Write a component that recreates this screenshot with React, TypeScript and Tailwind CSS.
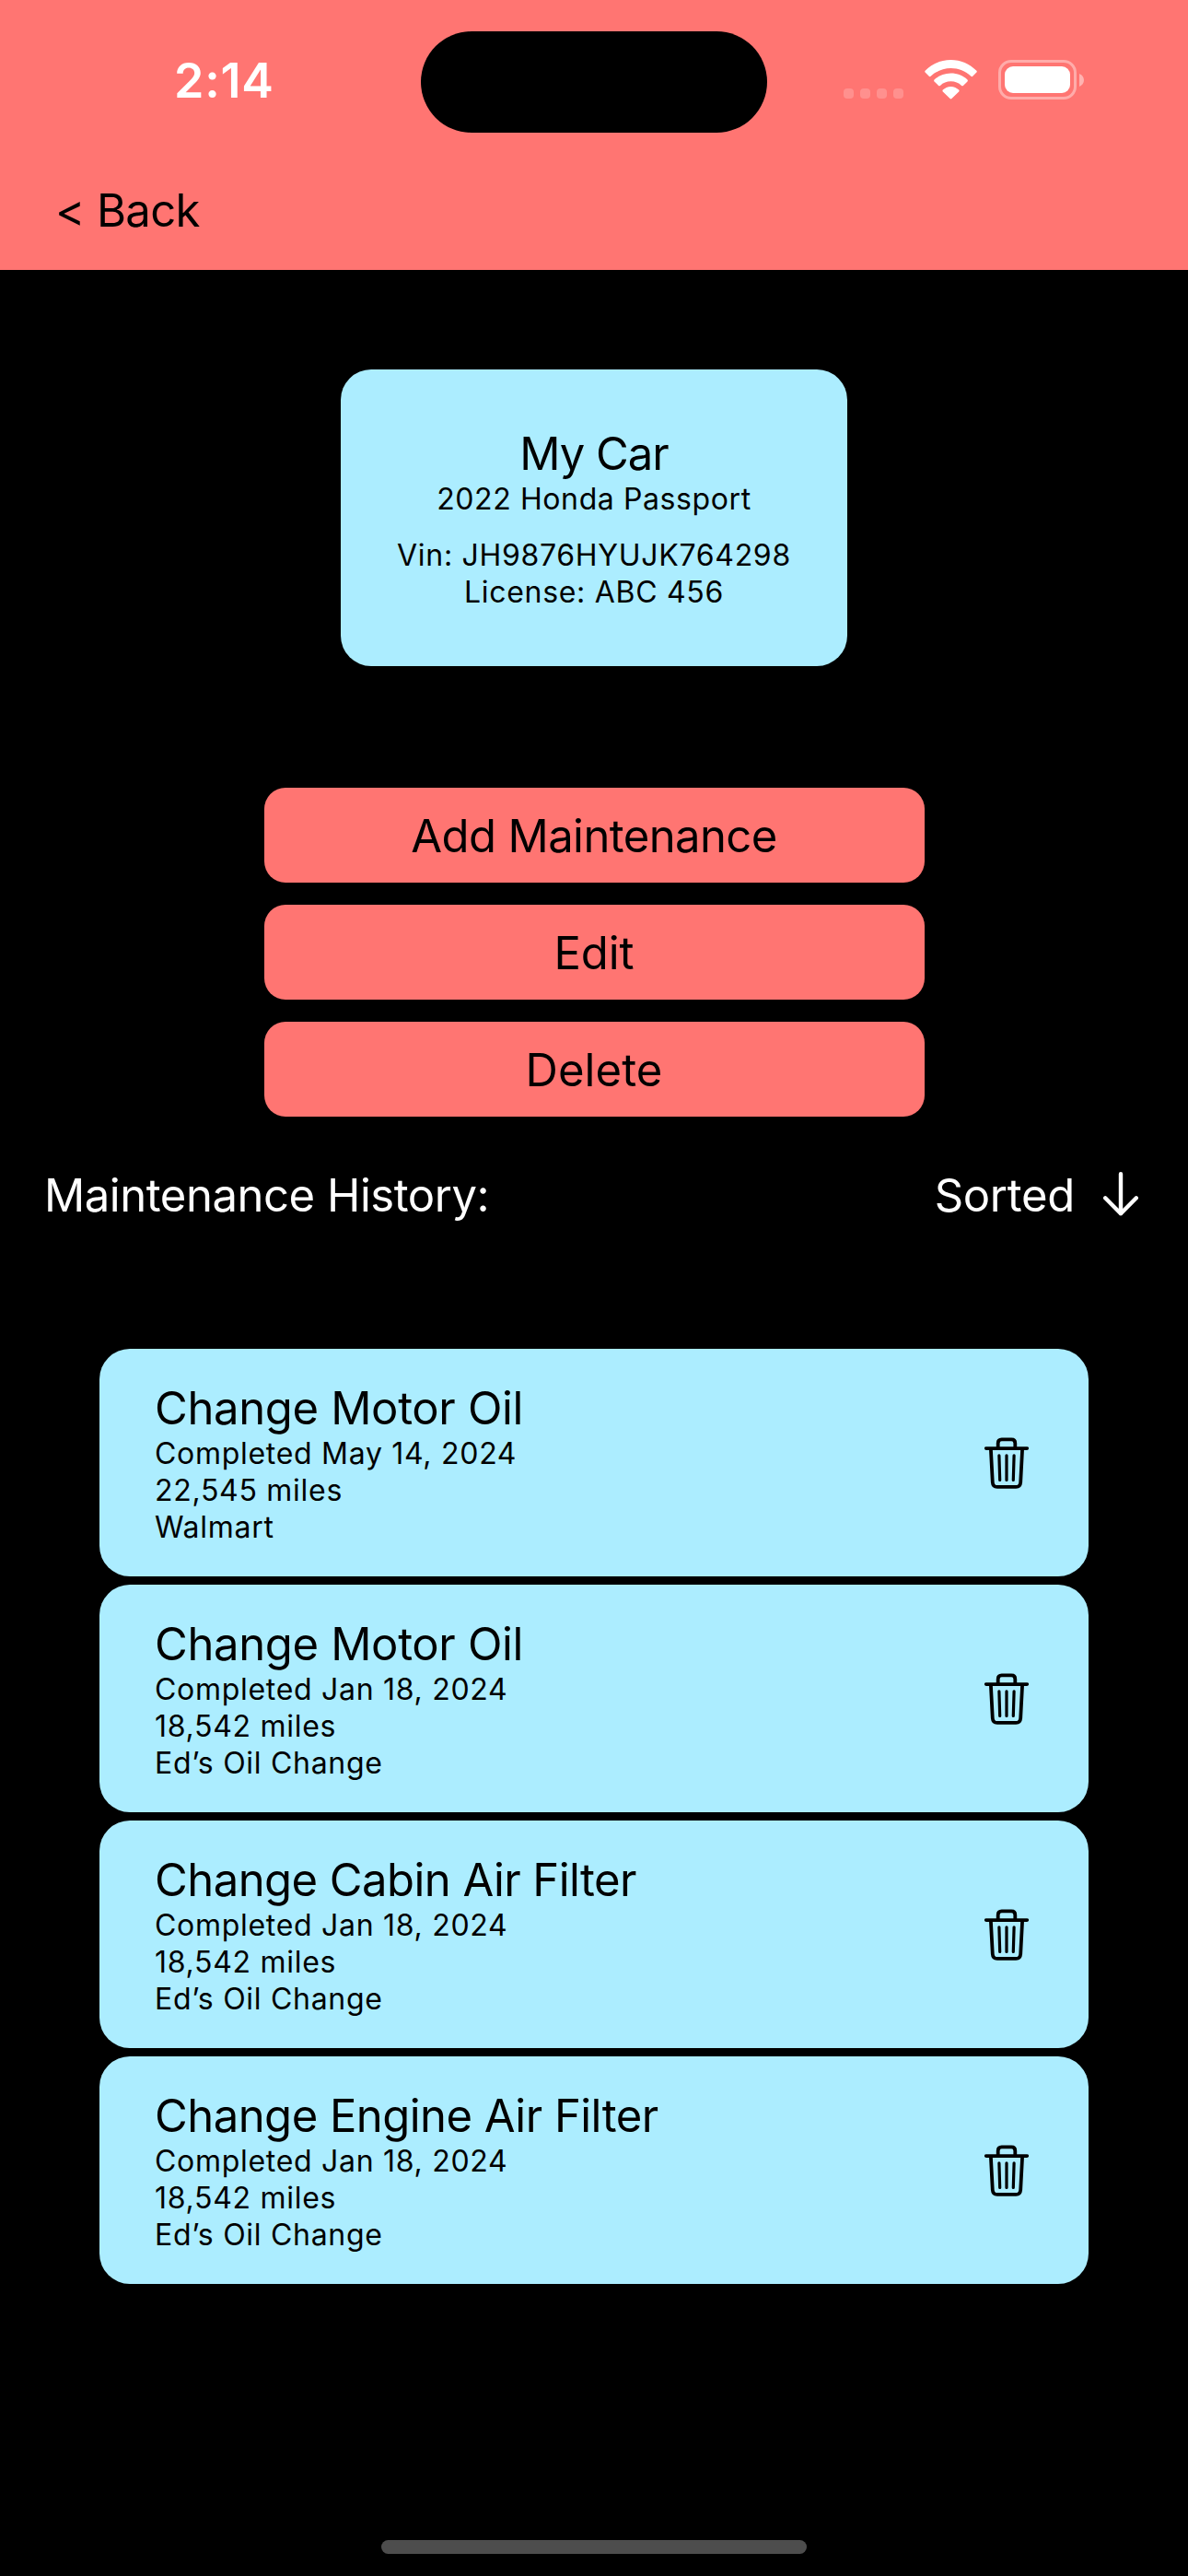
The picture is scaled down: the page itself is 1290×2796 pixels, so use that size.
type Entry = {
  title: string;
  tracking: string;
  date: string;
  miles: string;
  shop: string;
};

const entries: Entry[] = [
  { title: 'Change Motor Oil', tracking: 'tracking-[-0.35px]', date: 'May 14, 2024', miles: '22,545', shop: 'Walmart' },
  { title: 'Change Motor Oil', tracking: 'tracking-[-0.35px]', date: 'Jan 18, 2024', miles: '18,542', shop: 'Ed’s Oil Change' },
  { title: 'Change Cabin Air Filter', tracking: 'tracking-[-0.55px]', date: 'Jan 18, 2024', miles: '18,542', shop: 'Ed’s Oil Change' },
  { title: 'Change Engine Air Filter', tracking: 'tracking-[-0.53px]', date: 'Jan 18, 2024', miles: '18,542', shop: 'Ed’s Oil Change' },
];

const actions = [
  { label: 'Add Maintenance', tracking: 'tracking-[-0.6px]' },
  { label: 'Edit', tracking: 'tracking-[-0.1px]' },
  { label: 'Delete', tracking: 'tracking-[0.1px]' },
];

function WifiIcon() {
  return (
    <svg width="57" height="43" viewBox="0 0 57 43" fill="white">
      <path d="M28.5 9C36.5 9 44.5 12.2 50.4 17.8c.5.5 1.3.5 1.8 0L56.4 13.6c.5-.5.5-1.3 0-1.8C48.9 4.3 39 0 28.5 0S8.1 4.3.6 11.8c-.5.5-.5 1.3 0 1.8l4.2 4.2c.5.5 1.3.5 1.8 0C12.5 12.2 20.5 9 28.5 9Z" />
      <path d="M28.5 23.3c4.4 0 8.5 1.6 11.6 4.6.5.5 1.3.5 1.8 0l4.6-4.5c.5-.5.5-1.4 0-1.9C41.7 17.2 35.4 14.6 28.5 14.6s-13.2 2.6-18 6.9c-.5.5-.5 1.4 0 1.9l4.6 4.5c.5.5 1.3.5 1.8 0 3.1-3 7.2-4.6 11.6-4.6Z" />
      <path d="M37.2 32.6c.5.5.5 1.3 0 1.8L29.4 42c-.5.5-1.3.5-1.8 0l-7.8-7.6c-.5-.5-.5-1.3 0-1.8C22.1 30.5 25.1 29 28.5 29s6.4 1.5 8.7 3.6Z" />
    </svg>
  );
}

function Battery() {
  return (
    <div className="flex items-center gap-[3px]">
      <div className="h-[43px] w-[85px] rounded-[14px] border-[3px] border-white/40 p-1">
        <div className="h-full w-full rounded-[9px] bg-white" />
      </div>
      <svg width="5" height="14" viewBox="0 0 5 14" fill="white" fillOpacity="0.45">
        <path d="M0 0C3 1.2 5 3.8 5 7s-2 5.800-5 7Z" />
      </svg>
    </div>
  );
}

function TrashIcon() {
  return (
    <svg width="48" height="56" viewBox="0 0 48 56" fill="none" stroke="black" strokeWidth="3.8" strokeLinecap="round">
      <path d="M14.700 11.500V6.400q0-4 4-4h10.600q4 0 4 4V11.500" strokeLinecap="butt" />
      <path d="M1.800 12.100H46.200" />
      <path d="M6.900 13 8.800 49q.3 4.900 5 4.900h20.400q4.700 0 5-4.900L41.100 13" strokeLinecap="butt" />
      <path d="M15.900 19.800 16.700 46.500M24 19.800V46.500M32.100 19.800 31.300 46.500" strokeWidth="3.2" />
    </svg>
  );
}

function ArrowDownIcon() {
  return (
    <svg width="38" height="48" viewBox="0 0 38 48" fill="none" stroke="white" strokeWidth="4.400" strokeLinecap="round" strokeLinejoin="round">
      <path d="M19 2.300V45.200M2.200 28.300 19 45.200 35.800 28.300" />
    </svg>
  );
}

function StatusBar() {
  return (
    <div className="flex h-[150px] items-start">
      <div className="w-[457px] pt-[56px] pl-[189px] text-[52px] leading-[63px] font-semibold tracking-[0.78px] text-white">2:14</div>
      <div className="mt-[34px] h-[110px] w-[376px] rounded-full bg-black" />
      <div className="flex items-end pt-[65px] pl-[83px]">
        <div className="mb-px flex gap-[7px]">
          {[0, 1, 2, 3].map((i) => (
            <div key={i} className="size-[11px] rounded-[4px] bg-white/20" />
          ))}
        </div>
        <div className="ml-[23px]">
          <WifiIcon />
        </div>
        <div className="ml-[23px]">
          <Battery />
        </div>
      </div>
    </div>
  );
}

function CarCard() {
  return (
    <section className="mt-[108px] flex h-[322px] w-[550px] flex-col items-center rounded-[33px] bg-[#acedff] pt-[62px] text-[32px] leading-[39px] whitespace-nowrap">
      <h1 className="text-[49px] leading-[59px] tracking-[-1px]">My Car</h1>
      <p className="tracking-[0.6px]">2022 Honda Passport</p>
      <p className="mt-[22px] tracking-[0.7px]">Vin: JH9876HYUJK764298</p>
      <p className="mt-px tracking-[0.7px]">License: ABC 456</p>
    </section>
  );
}

function EntryCard({ entry }: { entry: Entry }) {
  return (
    <li className="flex h-[247px] items-start justify-between rounded-[33px] bg-[#acedff] pr-[65px] pl-[60px]">
      <div className="flex flex-col gap-px pt-[35px] text-[32px] leading-[39px] tracking-[0.71px]">
        <h2 className={`-mb-px text-[49px] leading-[59px] ${entry.tracking}`}>{entry.title}</h2>
        <p>Completed {entry.date}</p>
        <p>{entry.miles} miles</p>
        <p>{entry.shop}</p>
      </div>
      <button className="mt-24" aria-label="Delete entry">
        <TrashIcon />
      </button>
    </li>
  );
}

export default function App() {
  return (
    <div className="flex h-[2796px] w-[1290px] flex-col items-center bg-black font-['Inter','Liberation_Sans',sans-serif] text-black">
      <header className="h-[293px] w-full bg-[#ff7572]">
        <StatusBar />
        <button className="mt-[49px] ml-[60px] block text-[49px] leading-[59px] tracking-[-0.65px]">&lt; Back</button>
      </header>

      <CarCard />

      <div className="mt-[132px] flex w-[717px] flex-col gap-6">
        {actions.map((action) => (
          <button
            key={action.label}
            className={`flex h-[103px] items-center justify-center rounded-[23px] bg-[#ff7572] pt-[2px] text-[49px] leading-[59px] ${action.tracking}`}
          >
            {action.label}
          </button>
        ))}
      </div>

      <div className="mt-14 flex w-full items-start justify-between pr-[54px] pl-12 text-[49px] leading-[59px] text-white">
        <span className="tracking-[-0.46px]">Maintenance History:</span>
        <div className="flex items-start gap-[31px]">
          <span className="tracking-[-0.3px]">Sorted</span>
          <div className="pt-1">
            <ArrowDownIcon />
          </div>
        </div>
      </div>

      <ul className="mt-[137px] flex w-[1074px] flex-col gap-[9px]">
        {entries.map((entry, i) => (
          <EntryCard key={i} entry={entry} />
        ))}
      </ul>

      <div className="mt-auto mb-6 h-[15px] w-[462px] rounded-full bg-[#4d4d4d]" />
    </div>
  );
}
